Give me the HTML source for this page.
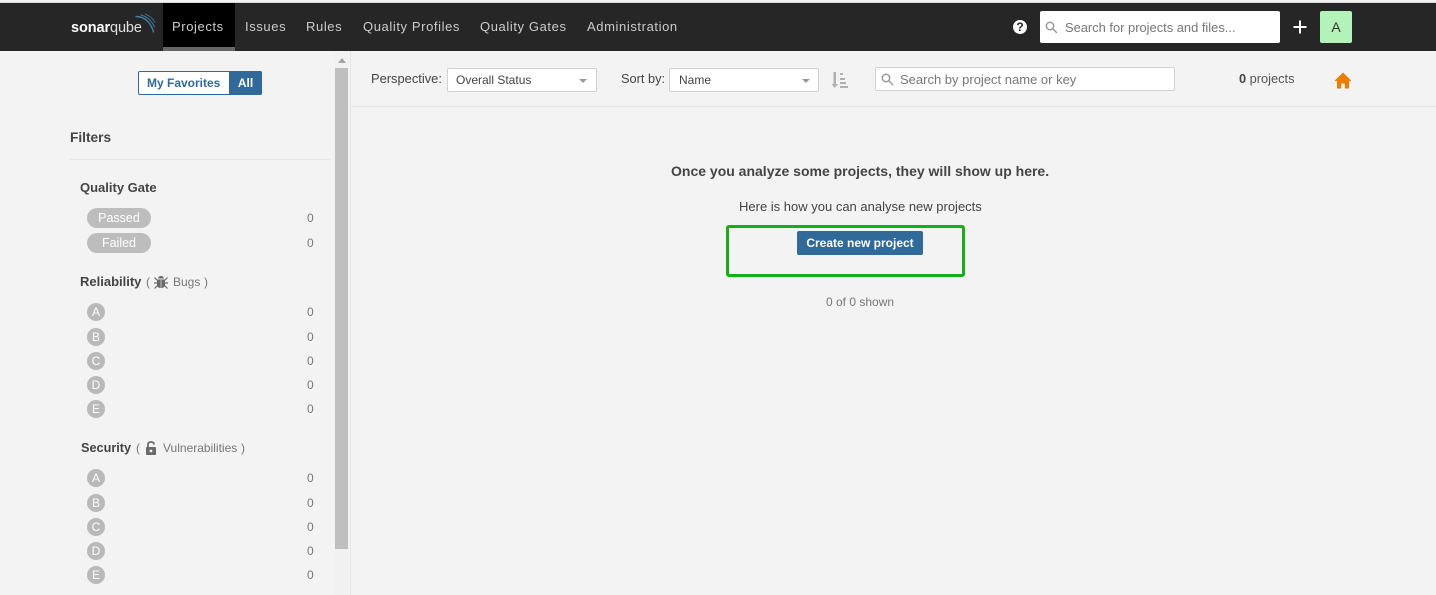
<!DOCTYPE html>
<html><head><meta charset="utf-8">
<style>
html,body{margin:0;padding:0;width:1436px;height:595px;overflow:hidden;background:#f3f3f3;}
body{font-family:"Liberation Sans",Arial,sans-serif;font-size:12px;color:#444;position:relative;}
.a{position:absolute;white-space:nowrap;line-height:16px;}
.box{position:absolute;box-sizing:border-box;}
.nav{color:#ccc;font-size:13px;letter-spacing:.6px;top:19px;}
.t{font-size:13px;font-weight:bold;color:#444;}
.sub{color:#777;font-size:12px;}
.n{left:307px;color:#777;font-size:12px;}
.pill{position:absolute;left:87px;width:64px;height:20px;border-radius:10px;background:#bdbdbd;color:#fff;text-align:center;line-height:20px;font-size:12.5px;}
.c{position:absolute;left:87px;width:18px;height:18px;border-radius:9px;background:#b9b9b9;color:#fff;text-align:center;line-height:18px;font-size:12px;}
.sel{position:absolute;box-sizing:border-box;background:#fff;border:1px solid #cfd3d7;border-radius:2px;height:24px;top:68px;line-height:22px;font-size:12px;color:#444;padding-left:8px;}
.car{position:absolute;width:0;height:0;border-left:4px solid transparent;border-right:4px solid transparent;border-top:4px solid #999;top:79px;}
</style></head>
<body>
<div class="box" style="left:0;top:2px;width:1436px;height:1px;background:#d8d8d8"></div>
<div class="box" style="left:0;top:3px;width:1436px;height:48px;background:#262626"></div>
<div class="box" style="left:163px;top:3px;width:72px;height:48px;background:#000;border-bottom:4px solid #666"></div>

<div class="a" style="left:71px;top:20px;color:#fff;font-size:14.500px;letter-spacing:-.1px"><b>sonar</b><span style="font-weight:normal;color:#e0e0e0">qube</span></div>
<svg class="box" style="left:130px;top:13px" width="28" height="22" viewBox="0 0 28 22" fill="none" stroke="#4b9fd5" stroke-linecap="round"><path d="M6 3.500C15 3.500 21 10 23.500 19" stroke-width="1.400" stroke="#3f7fa8"/><path d="M11 2C17 3.500 22 8 24.500 14" stroke-width="1" stroke="#3f7fa8"/><path d="M15 1C19 2.500 23 5.500 25 9.500" stroke-width=".8" stroke="#3f7fa8"/></svg>

<div class="a nav" style="left:172px">Projects</div>
<div class="a nav" style="left:245px">Issues</div>
<div class="a nav" style="left:306px">Rules</div>
<div class="a nav" style="left:363px">Quality Profiles</div>
<div class="a nav" style="left:480px">Quality Gates</div>
<div class="a nav" style="left:587px">Administration</div>

<div class="box" style="left:1013px;top:20px;width:14px;height:14px;border-radius:7px;background:#fff;color:#262626;font-weight:bold;font-size:12px;line-height:14px;text-align:center">?</div>
<div class="box" style="left:1040px;top:11px;width:240px;height:32px;background:#fff;border-radius:2px"></div>
<svg class="box" style="left:1045px;top:21px" width="13" height="13" viewBox="0 0 13 13" fill="none" stroke="#999" stroke-width="1.500"><circle cx="5" cy="5" r="3.700"/><path d="M8 8l3.500 3.500" stroke-linecap="round"/></svg>
<div class="a" style="left:1065px;top:20px;color:#777;font-size:12.900px">Search for projects and files...</div>
<svg class="box" style="left:1292px;top:19px" width="16" height="16" viewBox="0 0 16 16" stroke="#fff" stroke-width="2"><path d="M8 1.500V14.500M1.500 8H14.500"/></svg>
<div class="box" style="left:1320px;top:11px;width:32px;height:32px;background:#b3f2b8;border-radius:2px;color:#333;text-align:center;line-height:32px;font-size:14px">A</div>

<!-- sidebar -->
<div class="box" style="left:138px;top:71px;width:124px;height:24px;border:1px solid #2f6a9a;border-radius:2px;background:#fff"></div>
<div class="box" style="left:229px;top:71px;width:33px;height:24px;background:#2f6a9a;border-radius:0 2px 2px 0;color:#fff;font-weight:bold;text-align:center;line-height:24px">All</div>
<div class="a" style="left:147px;top:75px;color:#2f6a9a;font-weight:bold">My Favorites</div>
<div class="a" style="left:70px;top:129.500px;font-weight:bold;font-size:13.700px;color:#444">Filters</div>
<div class="box" style="left:70px;top:159px;width:260px;height:1px;background:#e6e6e6"></div>

<div class="a t" style="left:80px;top:180px">Quality Gate</div>
<div class="pill" style="top:208px">Passed</div><div class="a n" style="top:210px">0</div>
<div class="pill" style="top:233px">Failed</div><div class="a n" style="top:235px">0</div>

<div class="a t" style="left:80px;top:274px">Reliability</div>
<div class="a sub" style="left:146px;top:274px">(</div>
<svg class="box" style="left:153px;top:274px" width="16" height="16" viewBox="0 0 16 16" fill="#6a6a6a"><path d="M5 4.500C5.300 2.800 6.500 2 8 2s2.700.8 3 2.500z"/><path d="M4 5.500h8v5c0 2.500-1.500 3.500-4 3.500s-4-1-4-3.500z"/><path d="M1.500 3.500l3 3M14.500 3.500l-3 3M1 9h3M15 9h-3M1.500 14.500l3-3M14.500 14.500l-3-3" stroke="#6a6a6a" stroke-width="1.200" fill="none"/><path d="M7.700 6v8h.6V6z" fill="#f3f3f3"/></svg>
<div class="a sub" style="left:173px;top:274px">Bugs</div>
<div class="a sub" style="left:204px;top:274px">)</div>

<div class="c" style="top:303px">A</div><div class="a n" style="top:304px">0</div>
<div class="c" style="top:328px">B</div><div class="a n" style="top:329px">0</div>
<div class="c" style="top:352px">C</div><div class="a n" style="top:353px">0</div>
<div class="c" style="top:376px">D</div><div class="a n" style="top:377px">0</div>
<div class="c" style="top:400px">E</div><div class="a n" style="top:401px">0</div>

<div class="a t" style="left:81px;top:440px;font-size:12.700px">Security</div>
<div class="a sub" style="left:136px;top:440px">(</div>
<svg class="box" style="left:144px;top:440px" width="14" height="16" viewBox="0 0 14 16"><path d="M4 8V4.500C4 2.800 5.200 2 7 2s3 .8 3 2.500" fill="none" stroke="#6a6a6a" stroke-width="1.800"/><rect x="2" y="7" width="10" height="8" rx="1" fill="#6a6a6a"/><circle cx="7" cy="11" r="1.400" fill="#f3f3f3"/></svg>
<div class="a sub" style="left:163px;top:440px">Vulnerabilities</div>
<div class="a sub" style="left:241px;top:440px">)</div>

<div class="c" style="top:469px">A</div><div class="a n" style="top:470px">0</div>
<div class="c" style="top:494px">B</div><div class="a n" style="top:495px">0</div>
<div class="c" style="top:518px">C</div><div class="a n" style="top:519px">0</div>
<div class="c" style="top:542px">D</div><div class="a n" style="top:543px">0</div>
<div class="c" style="top:566px">E</div><div class="a n" style="top:567px">0</div>

<!-- scrollbar -->
<div class="box" style="left:334px;top:51px;width:15px;height:544px;background:#f1f1f1"></div>
<div class="box" style="left:338px;top:58px;width:0;height:0;border-left:4px solid transparent;border-right:4px solid transparent;border-bottom:5px solid #a3a3a3"></div>
<div class="box" style="left:335px;top:68px;width:13px;height:481px;background:#bfbfbf"></div>
<div class="box" style="left:350px;top:51px;width:1px;height:544px;background:#e6e6e6"></div>

<!-- toolbar -->
<div class="box" style="left:351px;top:106px;width:1085px;height:1px;background:#e6e6e6"></div>
<div class="a" style="left:371px;top:71px;font-size:12.900px;color:#444">Perspective:</div>
<div class="sel" style="left:447px;width:150px">Overall Status</div><div class="car" style="left:579px"></div>
<div class="a" style="left:621px;top:71px;font-size:12.800px;color:#444">Sort by:</div>
<div class="sel" style="left:669px;width:150px;padding-left:9px">Name</div><div class="car" style="left:802px"></div>
<svg class="box" style="left:831px;top:71px" width="18" height="18" viewBox="0 0 18 18" fill="#b0b0b0"><path d="M2.500 1h2.500v12h2L3.700 17 .5 13h2z"/><path d="M9 2h3v2H9zM9 7h5v2H9zM9 11h6v2H9zM9 15h8v2H9z"/></svg>
<div class="box" style="left:875px;top:67px;width:300px;height:24px;background:#fff;border:1px solid #cfd3d7;border-radius:2px"></div>
<svg class="box" style="left:881px;top:73px" width="13" height="13" viewBox="0 0 13 13" fill="none" stroke="#999" stroke-width="1.500"><circle cx="5" cy="5" r="3.700"/><path d="M8 8l3.500 3.500" stroke-linecap="round"/></svg>
<div class="a" style="left:900px;top:72px;color:#777;font-size:13px">Search by project name or key</div>
<div class="a" style="left:1239px;top:71px;font-size:12.800px;color:#555"><b style="color:#444">0</b> projects</div>
<svg class="box" style="left:1334px;top:72px" width="18" height="17" viewBox="0 0 18 17" fill="#ed7d00"><path d="M9 .5L.8 8.500 2 9.500 3 8.600V16.500H7.200V11.500H10.800V16.500H15V8.600L16 9.500 17.200 8.500 9 .5z"/></svg>

<!-- main -->
<div class="a" style="left:671px;top:163px;font-weight:bold;font-size:14px;color:#444">Once you analyze some projects, they will show up here.</div>
<div class="a" style="left:739px;top:199px;font-size:13px;color:#444">Here is how you can analyse new projects</div>
<div class="box" style="left:726px;top:225px;width:239px;height:52px;border:3px solid #16ad16;border-radius:3px"></div>
<div class="box" style="left:797px;top:231px;width:126px;height:24px;background:#2f6a9a;border-radius:2px;color:#fff;font-weight:bold;text-align:center;line-height:24px;font-size:12px">Create new project</div>
<div class="a" style="left:826px;top:294px;color:#777;font-size:12px">0 of 0 shown</div>
</body></html>
